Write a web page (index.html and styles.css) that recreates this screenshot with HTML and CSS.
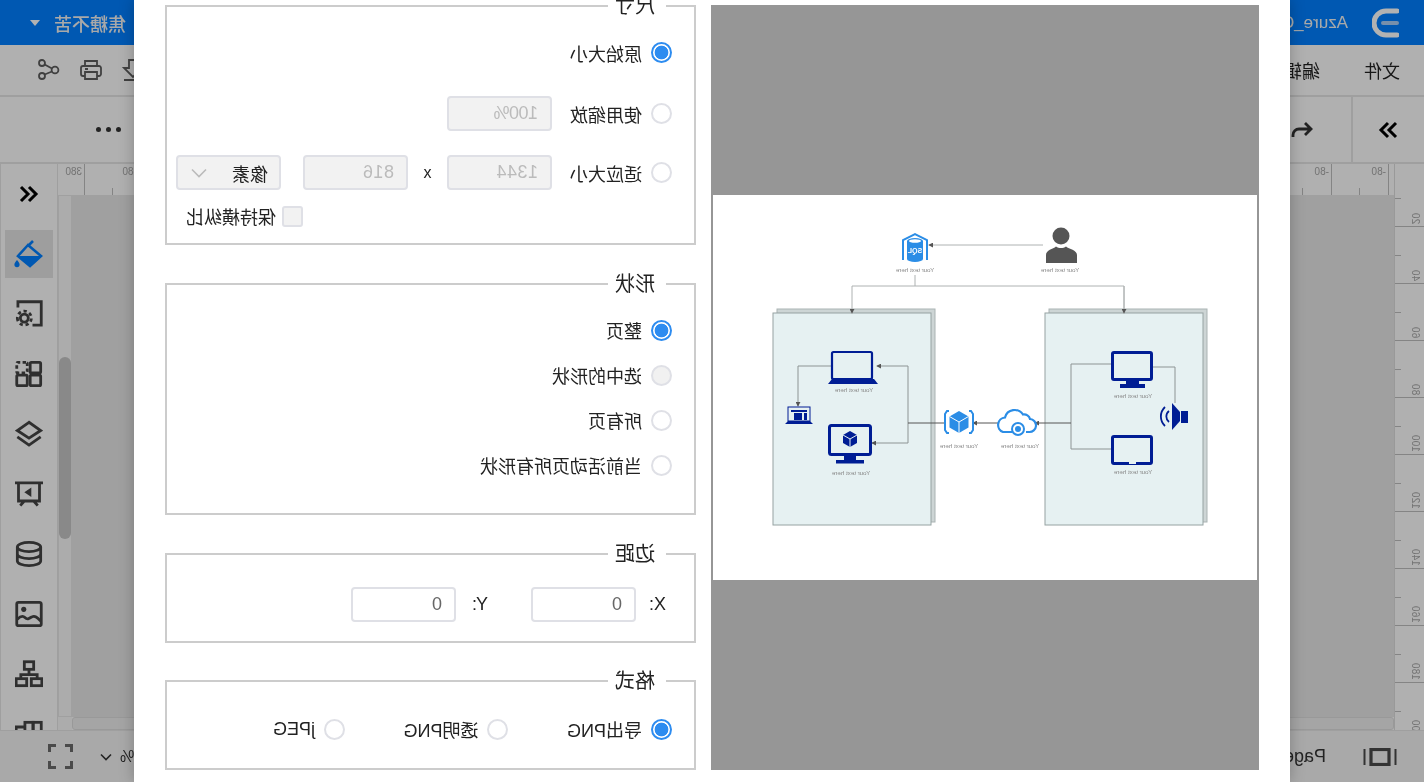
FILE: index.html
```html
<!DOCTYPE html>
<html lang="zh-CN">
<head>
    <meta charset="UTF-8">
    <meta name="viewport" content="width=device-width, initial-scale=1.0">
    <title>导出图片</title>
    <link rel="stylesheet" href="styles.css">
</head>
<body>
<div class="page">
    <div class="app">
        <header class="topbar">
            <div class="topbar-left">
                <svg class="logo" viewBox="0 0 27 30" fill="none">
                    <path d="M2 3H13a12 12 0 0 1 0 24H2" stroke="#fff" stroke-width="5" stroke-linecap="round"/>
                    <path d="M2 15H16" stroke="#a9cdf5" stroke-width="4" stroke-linecap="round"/>
                </svg>
                <span class="doc-name">Azure_Quickstart</span>
            </div>
            <div class="user">焦糖不苦<i class="caret"></i></div>
        </header>

        <nav class="menubar">
            <div class="menus"><span>文件</span><span>编辑</span></div>
            <div class="menu-icons">
                <svg class="icon" viewBox="0 0 24 24"><path d="M3 22H21M8 2h8v8h5l-9 9-9-9h5z"/></svg>
                <svg class="icon" viewBox="0 0 24 24"><path d="M6 8V3H18V8M6 18H4a2 2 0 0 1-2-2V10a2 2 0 0 1 2-2H20a2 2 0 0 1 2 2v6a2 2 0 0 1-2 2H18M6 14H18V21H6zM15 11h3"/></svg>
                <svg class="icon" viewBox="0 0 24 24"><circle cx="19" cy="5" r="3"/><circle cx="19" cy="18" r="3"/><circle cx="6" cy="12" r="3.4"/><path d="M9 10.5 16.4 6.5M9 13.5 16.4 16.5"/></svg>
            </div>
        </nav>

        <div class="toolbar">
            <div class="tool-left">
                <div class="collapse">
                    <svg class="chev" viewBox="0 0 24 24"><path d="M4 5l7 7-7 7M12 5l7 7-7 7"/></svg>
                </div>
                <svg class="icon undo" viewBox="0 0 24 24"><path d="M9 5 3 11l6 6M3 11H15a6 6 0 0 1 6 6v2"/></svg>
            </div>
            <div class="more"><i></i><i></i><i></i></div>
        </div>

        <div class="workspace">
            <div class="ruler-v">
                <div class="v-tick"><span>20</span></div>
                <div class="v-tick"><span>40</span></div>
                <div class="v-tick"><span>60</span></div>
                <div class="v-tick"><span>80</span></div>
                <div class="v-tick"><span>100</span></div>
                <div class="v-tick"><span>120</span></div>
                <div class="v-tick"><span>140</span></div>
                <div class="v-tick"><span>160</span></div>
                <div class="v-tick"><span>180</span></div>
                <div class="v-tick"><span>200</span></div>
            </div>
            <div class="stage">
                <div class="ruler-h">
                    <div class="tick-group">
                        <div class="h-tick">-80</div>
                        <div class="h-tick">-80</div>
                    </div>
                    <div class="tick-group">
                        <div class="h-tick">380</div>
                        <div class="h-tick short">380</div>
                    </div>
                </div>
                <div class="canvas-row">
                    <div class="canvas"></div>
                    <div class="scroll-v"><div class="thumb-v"></div></div>
                </div>
                <div class="scroll-row">
                    <div class="scroll-h"></div>
                    <div class="scroll-corner"></div>
                </div>
            </div>
            <aside class="sidebar">
                <div class="side-item">
                    <svg class="chev" viewBox="0 0 24 24"><path d="M12 5l-7 7 7 7M20 5l-7 7 7 7"/></svg>
                </div>
                <div class="side-item">
                    <div class="side-active">
                        <svg class="bucket" viewBox="0 0 30 30">
                            <path d="M11 2 16 7M16 6 26 17 14 27 3 17z" fill="none" stroke="#007fff" stroke-width="2.6"/>
                            <path d="M2 17H26L14 28z" fill="#007fff"/>
                            <path d="M27 21c-1.5 2-2.6 3.2-2.6 4.6a2.6 2.6 0 0 0 5.2 0c0-1.400-1.100-2.600-2.600-4.600z" fill="#007fff"/>
                        </svg>
                    </div>
                </div>
                <div class="side-item">
                    <svg class="side-icon" viewBox="0 0 24 24"><path d="M21.500 6.500V1.500H1.500V21.500H9"/><circle cx="16" cy="15.500" r="3.400"/><circle cx="16" cy="15.500" r="6" stroke-dasharray="2.800 2.400"/></svg>
                </div>
                <div class="side-item">
                    <svg class="side-icon" viewBox="0 0 24 24"><rect x="2" y="13" width="9" height="9" rx="1"/><rect x="13.500" y="13" width="9" height="9" rx="1"/><rect x="2" y="2" width="9" height="9" rx="1"/><rect x="13.500" y="2" width="9" height="9" rx="1" stroke-dasharray="3 2"/></svg>
                </div>
                <div class="side-item">
                    <svg class="side-icon" viewBox="0 0 24 24"><path d="M12 2 22 9 12 15.500 2 9zM2 14.500 12 21.500 22 14.500"/></svg>
                </div>
                <div class="side-item">
                    <svg class="side-icon" viewBox="0 0 24 24"><path d="M0 2.500H24M3 2.500V18H21V2.500M8 18 4.500 22M16 18 19.500 22"/><path class="solid" d="M10 6.500 16 10.500 10 14.500z"/></svg>
                </div>
                <div class="side-item">
                    <svg class="side-icon" viewBox="0 0 24 24"><ellipse cx="12" cy="6" rx="10" ry="4"/><path d="M2 6V18c0 2.200 4.500 4 10 4s10-1.800 10-4V6M2 12c0 2.200 4.500 4 10 4s10-1.800 10-4"/></svg>
                </div>
                <div class="side-item">
                    <svg class="side-icon" viewBox="0 0 24 24"><rect x="1.500" y="2" width="21" height="20" rx="1.500"/><circle class="solid" cx="16.500" cy="8" r="2.200"/><path d="M2 18c3-3 5-5 7.500-3.500s4 2.500 6 .5 4-1 6.500 1.500"/></svg>
                </div>
                <div class="side-item">
                    <svg class="side-icon" viewBox="0 0 24 24"><rect x="8" y="1.500" width="8" height="6.500"/><path d="M12 8V13M5 16V12.500H19V16"/><rect x="1" y="16" width="9" height="6"/><rect x="14" y="16" width="9" height="6"/></svg>
                </div>
                <div class="side-item">
                    <svg class="side-icon" viewBox="0 0 24 24"><rect x="1.500" y="2" width="7" height="9"/><rect x="8.500" y="2" width="7" height="9"/><path d="M15.500 6H23V11H15.500"/></svg>
                </div>
            </aside>
        </div>

        <footer class="statusbar">
            <div class="status-left">
                <svg class="pages" viewBox="0 0 34 18"><path d="M1.500 1V17M32.500 1V17" stroke-width="2"/><rect x="8" y="1.500" width="18" height="15" stroke-width="3.200"/></svg>
                <span>Page-1</span>
            </div>
            <div class="status-right">
                <span>100%</span>
                <svg class="zoom-caret" viewBox="0 0 12 8"><path d="M1 1.500 6 6.500 11 1.500"/></svg>
                <svg class="fullscreen" viewBox="0 0 25 25"><path d="M1.500 8V1.500H8M17 1.500H23.500V8M23.500 17V23.500H17M8 23.500H1.500V17"/></svg>
            </div>
        </footer>
    </div>

    <div class="mask"></div>

    <div class="modal">
        <div class="preview">
            <div class="preview-page">
                <svg class="diagram" viewBox="0 0 544 385" width="544" height="385">
                    <defs>
                        <marker id="head" viewBox="0 0 6 6" refX="5" refY="3" markerWidth="5" markerHeight="5" orient="auto">
                            <path d="M0 0 6 3 0 6z" fill="#555"/>
                        </marker>
                    </defs>

                    <!-- two tiers -->
                    <rect class="sheet-back" x="322" y="114" width="158" height="213"/>
                    <rect class="sheet" x="326" y="118" width="158" height="212"/>
                    <rect class="sheet-back" x="50" y="114" width="158" height="213"/>
                    <rect class="sheet" x="54" y="118" width="158" height="212"/>

                    <!-- connectors -->
                    <path class="wire light" d="M214 50H328" marker-end="url(#head)"/>
                    <path class="wire light" d="M342 80V91"/>
                    <path class="wire light" d="M133 118V91H405V118" marker-end="url(#head)"/>
                    <path class="wire light" d="M133 91V118" marker-end="url(#head)"/>
                    <path class="wire" d="M426 171H459V211" marker-end="url(#head)"/>
                    <path class="wire" d="M349 171H380" marker-end="url(#head)"/>
                    <path class="wire" d="M349 248H385" marker-end="url(#head)"/>
                    <path class="wire" d="M349 171V248"/>
                    <path class="wire dark" d="M312 228H349"/>
                    <path class="wire dark" d="M258 228H284" marker-end="url(#head)"/>
                    <path class="wire" d="M145 169H186V254H145"/>
                    <path class="wire dark" d="M186 228H222" marker-end="url(#head)"/>
                    <path class="wire" d="M104 172H82V208"/>

                    <!-- user -->
                    <circle cx="196" cy="41" r="8.500" fill="#555"/>
                    <path d="M180 68V60c0-5 8-6 11-8.500 3 2 7 2 10 0 3 2.500 10 3.500 10 8.500v8z" fill="#555"/>
                    <text class="cap" x="197" y="76.500">Your text here</text>

                    <!-- sql database -->
                    <path d="M330 65V45L342 39 354 45V65" fill="none" stroke="#2b8de6" stroke-width="2"/>
                    <path d="M334 46a8 3 0 0 1 16 0V64a8 3 0 0 1-16 0z" fill="#2b8de6"/>
                    <ellipse cx="342" cy="46" rx="6" ry="1.800" fill="#fff"/>
                    <text class="sql" x="342" y="58">SQL</text>
                    <text class="cap" x="342" y="76.500">Your text here</text>

                    <!-- laptop -->
                    <rect class="navy-line" x="385" y="157" width="40" height="27" rx="1.500"/>
                    <path class="navy" d="M379 189l4-5h42l4 5z"/>
                    <text class="cap" x="403" y="196.500">Your text here</text>

                    <!-- small web device -->
                    <rect x="447" y="212" width="22" height="14" fill="#e6f1f2" stroke="#001d94" stroke-width="1"/>
                    <path class="navy" d="M444 229l3-3h22l3 3zM450 215h16v2h-16zM450 218h3v7h-3zM455 218h8v7h-8z"/>

                    <!-- monitor with cube -->
                    <rect class="navy-line thick" x="386.500" y="230.500" width="41" height="29" rx="2"/>
                    <path class="navy" d="M401 259h12v6h8v3.500h-28V265h8z"/>
                    <path class="navy" d="M407 236l7 4v8l-7 4-7-4v-8z"/>
                    <path d="M400 240l7 4 7-4M407 244v8" fill="none" stroke="#e6f1f2"/>
                    <text class="cap" x="406" y="279.500">Your text here</text>

                    <!-- container service -->
                    <path d="M298 216l9.500 5.500v11L298 238l-9.500-5.500v-11z" fill="#2b8de6"/>
                    <path d="M288.500 221.500l9.500 5.500 9.500-5.500M298 227v11" fill="none" stroke="#fff"/>
                    <path d="M288 216h-2l-2 3v16l2 3h2M308 216h2l2 3v16l-2 3h-2" fill="none" stroke="#2b8de6" stroke-width="2"/>
                    <text class="cap" x="298" y="252.500">Your text here</text>

                    <!-- cloud endpoint -->
                    <path d="M231 237h-3a6.500 6.500 0 0 1-1-13 6 6 0 0 1 7-4.500 10 10 0 0 1 18 3 7.500 7.500 0 0 1 2 14.500h-9" fill="none" stroke="#2b8de6" stroke-width="2.200"/>
                    <circle cx="239" cy="234" r="6" fill="#fff" stroke="#2b8de6" stroke-width="2"/>
                    <circle cx="239" cy="234" r="3" fill="#2b8de6"/>
                    <text class="cap" x="237" y="252.500">Your text here</text>

                    <!-- monitor -->
                    <rect class="navy-line thick" x="105.500" y="157.500" width="39" height="27" rx="1.500"/>
                    <path class="navy" d="M118 184h13v5h6v4h-25v-4h6z"/>
                    <text class="cap" x="124" y="202.500">Your text here</text>

                    <!-- tablet -->
                    <rect class="navy-line thick" x="105.500" y="241.500" width="39" height="27" rx="1.500"/>
                    <rect x="121" y="267" width="7" height="2" fill="#e6f1f2"/>
                    <text class="cap" x="124" y="278.500">Your text here</text>

                    <!-- speaker -->
                    <path class="navy" d="M69 216h7v12h-7z"/>
                    <path class="navy" d="M77 217l8-9v27l-8-9z"/>
                    <path d="M88 216a7 7 0 0 1 0 11M92 212a13 13 0 0 1 0 19" fill="none" stroke="#001d94" stroke-width="1.800"/>
                </svg>
            </div>
        </div>

        <form class="settings">
            <fieldset>
                <legend>尺寸</legend>
                <div class="size-row first">
                    <label class="opt"><input type="radio" name="size" checked><span>原始大小</span></label>
                </div>
                <div class="size-row second">
                    <label class="opt"><input type="radio" name="size"><span>使用缩放</span></label>
                    <input class="num pct" type="text" value="100%" disabled>
                </div>
                <div class="size-row">
                    <label class="opt"><input type="radio" name="size"><span>适应大小</span></label>
                    <input class="num" type="text" value="1344" disabled>
                    <span class="times">x</span>
                    <input class="num" type="text" value="816" disabled>
                    <div class="unit">像素
                        <svg viewBox="0 0 16 10"><path d="M1 1.500 8 8.500 15 1.500"/></svg>
                    </div>
                </div>
                <label class="keep"><input type="checkbox" disabled><span>保持横纵比</span></label>
            </fieldset>

            <fieldset class="shape-set">
                <legend>形状</legend>
                <label class="opt"><input type="radio" name="shape" checked><span>整页</span></label>
                <label class="opt"><input type="radio" name="shape" disabled><span>选中的形状</span></label>
                <label class="opt"><input type="radio" name="shape"><span>所有页</span></label>
                <label class="opt"><input type="radio" name="shape"><span>当前活动页所有形状</span></label>
            </fieldset>

            <fieldset class="margin-set">
                <legend>边距</legend>
                <span class="axis x-axis">X:</span>
                <input class="num plain" type="text" value="0">
                <span class="axis y-axis">Y:</span>
                <input class="num plain" type="text" value="0">
            </fieldset>

            <fieldset class="format-set">
                <legend>格式</legend>
                <label class="opt"><input type="radio" name="format" checked><span>导出PNG</span></label>
                <label class="opt"><input type="radio" name="format"><span>透明PNG</span></label>
                <label class="opt"><input type="radio" name="format"><span>jPEG</span></label>
            </fieldset>
        </form>
    </div>
</div>
</body>
</html>
```

FILE: styles.css
```css
* {
    box-sizing: border-box;
}
body {
    margin: 0;
    background: #fff;
    font-family: "Liberation Sans", "Noto Sans CJK SC", sans-serif;
    font-size: 18px;
    color: #222;
}
/* whole screen is drawn right-to-left */
.page {
    position: relative;
    width: 1424px;
    height: 782px;
    overflow: hidden;
    transform: scaleX(-1);
}

/* editor behind the dialog */
.app {
    display: flex;
    flex-direction: column;
    height: 782px;
    background: #fcfcfc;
}
.topbar {
    display: flex;
    justify-content: space-between;
    align-items: center;
    height: 45px;
    padding: 0 30px 0 25px;
    background: #007fff;
    color: #fff;
    flex: none;
}
.topbar-left {
    display: flex;
    align-items: center;
    gap: 24px;
}
.logo {
    width: 27px;
    height: 30px;
}
.doc-name {
    font-size: 17px;
    color: #f2f2f2;
}
.user {
    display: flex;
    align-items: center;
    gap: 14px;
    font-weight: 500;
    color: #f2f2f2;
}
.caret {
    width: 0;
    height: 0;
    border: 5px solid transparent;
    border-top: 6px solid #fff;
    border-bottom: 0;
}
.menubar {
    display: flex;
    justify-content: space-between;
    align-items: center;
    height: 52px;
    padding: 0 37px 0 24px;
    border-bottom: 2px solid #e4e4e4;
    flex: none;
}
.menus {
    display: flex;
    gap: 44px;
}
.menu-icons {
    display: flex;
    gap: 18px;
}
.icon {
    width: 24px;
    height: 24px;
    fill: none;
    stroke: #5c5c5c;
    stroke-width: 1.8;
}
.toolbar {
    display: flex;
    justify-content: space-between;
    align-items: center;
    height: 67px;
    padding-right: 96px;
    border-bottom: 2px solid #e4e4e4;
    flex: none;
}
.tool-left {
    display: flex;
    align-items: center;
    height: 100%;
}
.collapse {
    display: flex;
    align-items: center;
    justify-content: center;
    width: 73px;
    height: 100%;
    border-right: 2px solid #e4e4e4;
}
.chev {
    width: 24px;
    height: 24px;
    fill: none;
    stroke: #000;
    stroke-width: 3;
}
.undo {
    margin-left: 37px;
    stroke: #333;
    stroke-width: 2.8;
}
.more {
    display: flex;
    gap: 5px;
}
.more i {
    width: 5px;
    height: 5px;
    border-radius: 50%;
    background: #333;
}
.workspace {
    display: flex;
    flex: 1;
    min-height: 0;
}
.ruler-v {
    width: 30px;
    padding-top: 6px;
    overflow: hidden;
    flex: none;
    border-right: 1px solid #dcdcdc;
}
.v-tick {
    display: flex;
    justify-content: flex-start;
    align-items: flex-end;
    height: 57px;
    padding: 0 0 2px 4px;
    border-bottom: 1px solid #bdbdbd;
    background: linear-gradient(#bdbdbd, #bdbdbd) right 28px / 6px 1px no-repeat;
    font-size: 10px;
    color: #a5a5a5;
}
.v-tick span {
    writing-mode: vertical-rl;
    transform: rotate(180deg);
    line-height: 9px;
}
.stage {
    display: flex;
    flex-direction: column;
    flex: 1;
    min-width: 0;
}
.ruler-h {
    display: flex;
    justify-content: space-between;
    height: 31px;
    padding-left: 5px;
    flex: none;
}
.tick-group {
    display: flex;
}
.h-tick {
    width: 57px;
    padding: 2px 0 0 2px;
    border-left: 1px solid #bdbdbd;
    background: linear-gradient(#bdbdbd, #bdbdbd) 28px bottom / 1px 7px no-repeat;
    font-size: 10px;
    color: #a5a5a5;
}
.h-tick.short {
    width: 27px;
}
.canvas-row {
    display: flex;
    flex: 1;
    min-height: 0;
}
.canvas {
    flex: 1;
    background: #e5e5e5;
}
.scroll-v {
    width: 14px;
    padding-top: 161px;
    background: #f6f6f6;
    border: 1px solid #e6e6e6;
    flex: none;
}
.thumb-v {
    width: 12px;
    height: 182px;
    border-radius: 6px;
    background: #c4c4c4;
}
.scroll-row {
    display: flex;
    height: 13px;
    flex: none;
}
.scroll-h {
    flex: 1;
    background: #ededed;
    border: 1px solid #dcdcdc;
    border-radius: 3px;
}
.scroll-corner {
    width: 14px;
    background: #f6f6f6;
}
.sidebar {
    width: 58px;
    height: 566px;
    overflow: hidden;
    flex: none;
    border-left: 1px solid #e4e4e4;
    border-right: 1px solid #e4e4e4;
}
.side-item {
    display: flex;
    align-items: center;
    justify-content: center;
    height: 60px;
}
.side-active {
    display: flex;
    align-items: center;
    justify-content: center;
    width: 48px;
    height: 48px;
    background: #e2e2e2;
}
.bucket {
    width: 30px;
    height: 30px;
}
.side-icon {
    width: 28px;
    height: 28px;
    fill: none;
    stroke: #444;
    stroke-width: 2.4;
}
.side-icon .solid {
    fill: #444;
    stroke: none;
}
.statusbar {
    display: flex;
    justify-content: space-between;
    align-items: center;
    height: 52px;
    padding: 0 48px 0 27px;
    background: #f2f2f2;
    border-top: 1px solid #e4e4e4;
    flex: none;
}
.status-left {
    display: flex;
    align-items: center;
    gap: 37px;
    color: #333;
}
.pages {
    width: 34px;
    height: 18px;
    fill: none;
    stroke: #4a4a4a;
}
.status-right {
    display: flex;
    align-items: center;
    color: #333;
    font-size: 16px;
}
.zoom-caret {
    width: 12px;
    height: 8px;
    margin-left: 8px;
    fill: none;
    stroke: #333;
    stroke-width: 1.6;
}
.fullscreen {
    width: 25px;
    height: 25px;
    margin-left: 27px;
    fill: none;
    stroke: #6a6a6a;
    stroke-width: 3;
}

/* dim layer and dialog */
.mask {
    position: absolute;
    inset: 0;
    background: rgba(0, 0, 0, 0.3);
}
.modal {
    position: absolute;
    top: 0;
    bottom: 0;
    left: 134px;
    width: 1156px;
    display: flex;
    gap: 15px;
    padding-left: 31px;
    background: #fff;
    box-shadow: 0 0 14px rgba(0, 0, 0, 0.25);
}
.preview {
    display: flex;
    align-items: center;
    justify-content: center;
    width: 548px;
    height: 765px;
    margin-top: 5px;
    background: #969696;
    flex: none;
}
.preview-page {
    width: 544px;
    height: 385px;
    background: #fff;
}
.diagram {
    display: block;
    filter: blur(0.7px);
}
.sheet {
    fill: #e6f1f2;
    stroke: #96a2a2;
    stroke-width: 1;
}
.sheet-back {
    fill: #cdd5d5;
    stroke: #aab3b3;
    stroke-width: 1;
}
.wire {
    fill: none;
    stroke: #8d9494;
    stroke-width: 1;
}
.wire.light {
    stroke: #aeb2b2;
}
.wire.dark {
    stroke: #555;
}
.navy {
    fill: #001d94;
}
.navy-line {
    fill: none;
    stroke: #001d94;
    stroke-width: 2.2;
}
.navy-line.thick {
    stroke-width: 3;
}
.cap {
    font-size: 6.2px;
    fill: #888;
    text-anchor: middle;
}
.sql {
    font-size: 7px;
    font-weight: bold;
    fill: #fff;
    text-anchor: middle;
}

/* export options */
.settings {
    width: 531px;
    margin-top: -6px;
    flex: none;
}
fieldset {
    margin: 0 0 27px;
    padding: 17px 0 16px 22px;
    border: 2px solid #ccc;
    min-width: 0;
}
legend {
    margin-left: 6px;
    padding: 0 7px 0 11px;
    font-size: 20px;
    line-height: 24px;
}
.opt {
    display: flex;
    align-items: center;
    gap: 9px;
    height: 22px;
}
input[type="radio"], input[type="checkbox"] {
    appearance: none;
    width: 21px;
    height: 21px;
    margin: 0;
    border: 2px solid #dfe0e6;
    border-radius: 50%;
    background: #fff;
    flex: none;
}
input[type="radio"]:checked {
    border-color: #2d8cf0;
    background: radial-gradient(circle, #2d8cf0 0, #2d8cf0 6.5px, #fff 7.2px);
}
input[type="radio"]:disabled {
    background: #f1f1f1;
}
input[type="checkbox"] {
    border-radius: 3px;
    background: #f2f2f2;
}
.size-row {
    display: flex;
    align-items: center;
    height: 35px;
    margin-top: 24px;
}
.size-row.first {
    margin-top: 0;
}
.size-row.second {
    margin-top: 26px;
}
.size-row .opt {
    width: 120px;
}
.num {
    width: 105px;
    height: 35px;
    padding: 0 0 0 12px;
    border: 2px solid #dfe0e6;
    border-radius: 4px;
    background: #f2f2f2;
    font: 18px "Liberation Sans", sans-serif;
    letter-spacing: 0.5px;
    color: #bbb;
    flex: none;
}
.num.pct {
    letter-spacing: -0.5px;
}
.num.plain {
    background: #fff;
    color: #666;
}
.times {
    width: 39px;
    text-align: center;
    font-size: 16px;
}
.unit {
    display: flex;
    align-items: center;
    justify-content: space-between;
    width: 105px;
    height: 35px;
    margin-left: 22px;
    padding: 0 13px 0 11px;
    border: 2px solid #dfe0e6;
    border-radius: 4px;
    background: #f2f2f2;
    color: #222;
}
.unit svg {
    width: 16px;
    height: 10px;
    fill: none;
    stroke: #bbb;
    stroke-width: 1.6;
}
.keep {
    display: flex;
    align-items: center;
    gap: 6px;
    height: 22px;
    margin: 15px 0 0 369px;
}
.shape-set {
    padding: 23px 0 37px 22px;
    display: flex;
    flex-direction: column;
    gap: 23px;
}
.margin-set {
    display: flex;
    align-items: center;
    margin-bottom: 26px;
    padding: 21px 0 19px 22px;
}
.axis {
    width: 30px;
}
.x-axis {
    margin-left: 6px;
}
.y-axis {
    width: 32px;
    margin-left: 43px;
}
.format-set {
    display: flex;
    padding: 25px 0 28px 22px;
}
.format-set .opt {
    width: 163.5px;
}
```
